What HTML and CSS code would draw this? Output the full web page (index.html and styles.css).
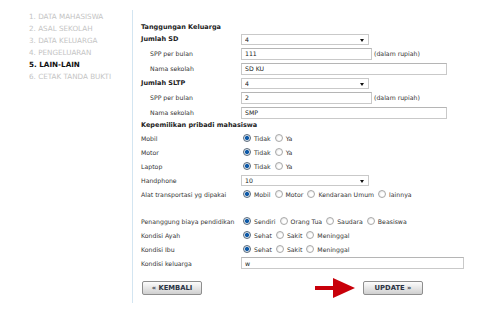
FILE: index.html
```html
<!DOCTYPE html>
<html lang="id">
<head>
  <meta charset="UTF-8" />
  <title>Lain-lain</title>
  <link rel="stylesheet" href="styles.css">
</head>
<body>

  <div class="page">
    <ul class="steps">
      <li>1. DATA MAHASISWA</li>
      <li>2. ASAL SEKOLAH</li>
      <li>3. DATA KELUARGA</li>
      <li>4. PENGELUARAN</li>
      <li class="active">5. LAIN-LAIN</li>
      <li>6. CETAK TANDA BUKTI</li>
    </ul>

    <form class="main">
      <div class="row head">Tanggungan Keluarga</div>
      <div class="row">
        <label class="bold">Jumlah SD</label>
        <span class="select"><select><option>4</option></select></span>
      </div>
      <div class="row tall">
        <label class="sub">SPP per bulan</label>
        <div class="field"><input class="short" value="111"><span class="note">(dalam rupiah)</span></div>
      </div>
      <div class="row tall">
        <label class="sub">Nama sekolah</label>
        <div class="field"><input class="long" value="SD KU"></div>
      </div>

      <div class="row">
        <label class="bold">Jumlah SLTP</label>
        <span class="select"><select><option>4</option></select></span>
      </div>
      <div class="row tall">
        <label class="sub">SPP per bulan</label>
        <div class="field"><input class="short" value="2"><span class="note">(dalam rupiah)</span></div>
      </div>
      <div class="row tall">
        <label class="sub">Nama sekolah</label>
        <div class="field"><input class="long" value="SMP"></div>
      </div>

      <div class="row head small">Kepemilikan pribadi mahasiswa</div>
      <div class="row">
        <label>Mobil</label>
        <div class="field">
          <label class="opt"><input type="radio" name="mobil" checked>Tidak</label>
          <label class="opt"><input type="radio" name="mobil">Ya</label>
        </div>
      </div>
      <div class="row">
        <label>Motor</label>
        <div class="field">
          <label class="opt"><input type="radio" name="motor" checked>Tidak</label>
          <label class="opt"><input type="radio" name="motor">Ya</label>
        </div>
      </div>
      <div class="row">
        <label>Laptop</label>
        <div class="field">
          <label class="opt"><input type="radio" name="laptop" checked>Tidak</label>
          <label class="opt"><input type="radio" name="laptop">Ya</label>
        </div>
      </div>
      <div class="row">
        <label>Handphone</label>
        <span class="select"><select><option>10</option></select></span>
      </div>
      <div class="row">
        <label>Alat transportasi yg dipakai</label>
        <div class="field">
          <label class="opt"><input type="radio" name="trans" checked>Mobil</label>
          <label class="opt"><input type="radio" name="trans">Motor</label>
          <label class="opt"><input type="radio" name="trans">Kendaraan Umum</label>
          <label class="opt"><input type="radio" name="trans">lainnya</label>
        </div>
      </div>

      <div class="spacer"></div>

      <div class="row">
        <label>Penanggung biaya pendidikan</label>
        <div class="field">
          <label class="opt"><input type="radio" name="biaya" checked>Sendiri</label>
          <label class="opt"><input type="radio" name="biaya">Orang Tua</label>
          <label class="opt"><input type="radio" name="biaya">Saudara</label>
          <label class="opt"><input type="radio" name="biaya">Beasiswa</label>
        </div>
      </div>
      <div class="row">
        <label>Kondisi Ayah</label>
        <div class="field">
          <label class="opt"><input type="radio" name="ayah" checked>Sehat</label>
          <label class="opt"><input type="radio" name="ayah">Sakit</label>
          <label class="opt"><input type="radio" name="ayah">Meninggal</label>
        </div>
      </div>
      <div class="row">
        <label>Kondisi Ibu</label>
        <div class="field">
          <label class="opt"><input type="radio" name="ibu" checked>Sehat</label>
          <label class="opt"><input type="radio" name="ibu">Sakit</label>
          <label class="opt"><input type="radio" name="ibu">Meninggal</label>
        </div>
      </div>
      <div class="row">
        <label>Kondisi keluarga</label>
        <div class="field"><input class="wide" value="w"></div>
      </div>

      <div class="actions">
        <button type="button" class="btn">&laquo; KEMBALI</button>
        <div class="next">
          <svg class="arrow" width="40" height="20" viewBox="0 0 40 20">
            <rect x="0" y="8" width="20" height="4" fill="#c8000a"/>
            <polygon points="18,0 40,10 18,20" fill="#c8000a"/>
          </svg>
          <button type="button" class="btn">UPDATE &raquo;</button>
        </div>
      </div>
    </form>
  </div>

</body>
</html>
```

FILE: styles.css
```css
body {
  margin: 0;
  font-family: "DejaVu Sans", Verdana, sans-serif;
  font-size: 6.2px;
  color: #333;
  background: #fff;
}

.page {
  display: flex;
  align-items: flex-start;
}

/* Step list */
.steps {
  list-style: none;
  margin: 0;
  padding: 11px 0 0 29px;
  width: 103px;
  font-size: 7.2px;
  line-height: 12px;
  color: #c4c4c4;
}

.steps .active {
  color: #111;
  font-weight: bold;
}

/* Form */
.main {
  margin-top: 10px;
  padding: 12px 0 0 8px;
  border-left: 1px solid #d3e5f1;
  height: 281px;
  width: 340px;
}

.row {
  display: grid;
  grid-template-columns: 100px 1fr;
  align-items: center;
  height: 14px;
}

.row.tall {
  height: 15px;
}

.row.head {
  display: block;
  height: 10px;
  line-height: 10px;
  font-size: 6.5px;
  font-weight: bold;
  color: #222;
}

.row.head.small {
  height: 11px;
  line-height: 11px;
}

.bold {
  font-size: 6.5px;
  font-weight: bold;
  color: #222;
}

.sub {
  padding-left: 9px;
}

.field {
  display: flex;
  align-items: center;
}

.spacer {
  height: 13px;
}

input {
  font: inherit;
  color: #222;
  box-sizing: border-box;
  height: 12px;
  padding: 0 3px;
  border: 1px solid #c9c9c9;
  border-top-color: #b5b5b5;
  margin: 0;
}

input.short { width: 131px; }
input.long { width: 206px; }
input.wide { width: 223px; }

.note {
  margin-left: 2px;
}

/* Select with drawn arrow */
.select {
  position: relative;
  width: 128px;
  height: 11px;
}

.select select {
  appearance: none;
  -webkit-appearance: none;
  font: inherit;
  color: #222;
  width: 100%;
  height: 11px;
  padding: 0 3px;
  border: 1px solid #c9c9c9;
  border-radius: 0;
  background: #fff;
  box-sizing: border-box;
  display: block;
}

.select::after {
  content: "";
  position: absolute;
  right: 5px;
  top: 5px;
  border-left: 2.5px solid transparent;
  border-right: 2.5px solid transparent;
  border-top: 3px solid #111;
}

/* Radios */
.opt {
  display: inline-flex;
  align-items: center;
  margin-right: 2px;
}

input[type="radio"] {
  appearance: none;
  -webkit-appearance: none;
  width: 8px;
  height: 8px;
  padding: 0;
  margin: 0 3px 0 2px;
  border: 1px solid #a9a9a9;
  border-radius: 50%;
  background: radial-gradient(circle at 60% 60%, #fff 30%, #dcdcdc 100%);
}

input[type="radio"]:checked {
  border-color: #5a6a7a;
  background: radial-gradient(circle, #0e5aa8 0 1.6px, #d7e2ee 2.4px);
}

/* Buttons */
.actions {
  display: flex;
  justify-content: space-between;
  align-items: center;
  width: 281px;
  margin-top: 8px;
  padding-left: 1px;
}

.next {
  display: flex;
  align-items: center;
  gap: 8px;
}

.btn {
  font: inherit;
  font-weight: bold;
  font-size: 6.8px;
  color: #2c3445;
  width: 60px;
  height: 14px;
  padding: 0;
  border: 1px solid #8e8e8e;
  border-radius: 2px;
  background: linear-gradient(#fdfdfd, #e4e4e4 55%, #cfcfcf);
  cursor: pointer;
}
```
